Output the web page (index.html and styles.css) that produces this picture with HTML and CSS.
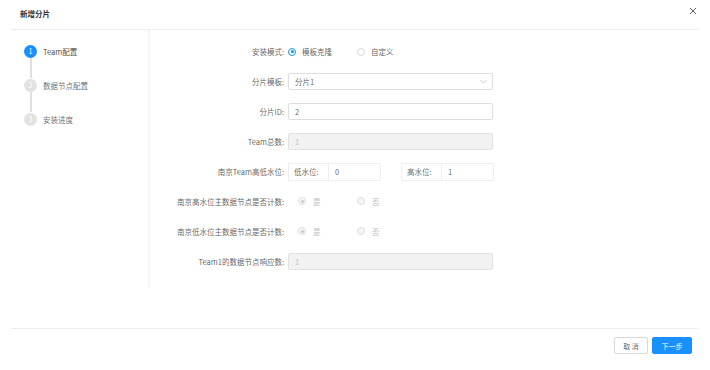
FILE: index.html
```html
<!DOCTYPE html>
<html lang="zh">
  <head>
    <meta charset="utf-8">
    <title>新增分片</title>
    <link rel="stylesheet" href="styles.css">
  </head>
  <body>
    <div class="modal">
      <div class="modal-header">
        <span class="modal-title">新增分片</span>
        <svg class="modal-close" width="8" height="8" viewBox="0 0 8 8">
          <path d="M1 1 L7 7 M7 1 L1 7" stroke="#666" stroke-width="1" fill="none"/>
        </svg>
      </div>
      <div class="modal-body">
        <ul class="steps">
          <li class="step step-active"><span class="step-icon">1</span><span class="step-title">Team配置</span></li>
          <li class="step"><span class="step-icon">2</span><span class="step-title">数据节点配置</span></li>
          <li class="step step-last"><span class="step-icon">3</span><span class="step-title">安装进度</span></li>
        </ul>
        <form class="form">
          <div class="form-row">
            <label class="form-label">安装模式:</label>
            <div class="form-control radio-group">
              <span class="radio"><span class="radio-dot radio-checked"></span>模板克隆</span>
              <span class="radio"><span class="radio-dot"></span>自定义</span>
            </div>
          </div>
          <div class="form-row">
            <label class="form-label">分片模板:</label>
            <div class="form-control">
              <div class="input select">
                <span>分片1</span>
                <svg width="7" height="5" viewBox="0 0 7 5"><path d="M0.5 1 L3.5 4 L6.5 1" stroke="#bfbfbf" stroke-width="0.8" fill="none"/></svg>
              </div>
            </div>
          </div>
          <div class="form-row">
            <label class="form-label">分片ID:</label>
            <div class="form-control"><div class="input">2</div></div>
          </div>
          <div class="form-row">
            <label class="form-label">Team总数:</label>
            <div class="form-control"><div class="input input-disabled">1</div></div>
          </div>
          <div class="form-row">
            <label class="form-label">南京Team高低水位:</label>
            <div class="form-control water">
              <div class="input-group">
                <span class="addon">低水位:</span><span class="input addon-input">0</span>
              </div>
              <div class="input-group">
                <span class="addon">高水位:</span><span class="input addon-input">1</span>
              </div>
            </div>
          </div>
          <div class="form-row">
            <label class="form-label">南京高水位主数据节点是否计数:</label>
            <div class="form-control radio-group radio-disabled">
              <span class="radio"><span class="radio-dot radio-checked"></span>是</span>
              <span class="radio"><span class="radio-dot"></span>否</span>
            </div>
          </div>
          <div class="form-row">
            <label class="form-label">南京低水位主数据节点是否计数:</label>
            <div class="form-control radio-group radio-disabled">
              <span class="radio"><span class="radio-dot radio-checked"></span>是</span>
              <span class="radio"><span class="radio-dot"></span>否</span>
            </div>
          </div>
          <div class="form-row">
            <label class="form-label">Team1的数据节点响应数:</label>
            <div class="form-control"><div class="input input-disabled">1</div></div>
          </div>
        </form>
      </div>
      <div class="modal-footer">
        <button class="btn" type="button">取 消</button>
        <button class="btn btn-primary" type="button">下一步</button>
      </div>
    </div>
  </body>
</html>
```

FILE: styles.css
```css
html {
  font-family: "Noto Sans CJK SC", "Noto Sans", sans-serif;
}

body {
  margin: 0;
  background: #fff;
  color: rgba(0, 0, 0, 0.65);
  font-size: 7.5px;
}

.modal {
  width: 710px;
  height: 370px;
  padding: 0 11px;
  box-sizing: border-box;
}

.modal-header {
  height: 29px;
  border-bottom: 1px solid #eeeeee;
  display: flex;
  align-items: center;
  justify-content: space-between;
  padding: 0 2px 0 9px;
}

.modal-title {
  font-weight: bold;
  color: rgba(0, 0, 0, 0.85);
  font-size: 7.5px;
  margin-top: -2px;
}

.modal-close {
  margin-top: -7px;
}

.modal-body {
  display: flex;
  height: 257px;
}

.steps {
  list-style: none;
  margin: 0;
  padding: 4px 0 0 13px;
  width: 124px;
  border-right: 2px solid #f5f5f5;
}

.step {
  display: flex;
  align-items: center;
  height: 34px;
  position: relative;
}

.step::after {
  content: "";
  position: absolute;
  left: 6px;
  top: 24px;
  width: 1.5px;
  height: 20px;
  background: #e0e0e0;
}

.step-last::after {
  display: none;
}

.step-icon {
  width: 13px;
  height: 13px;
  border-radius: 50%;
  background: #e2e2e2;
  color: #fff;
  font-size: 7px;
  line-height: 13px;
  text-align: center;
  margin-right: 6px;
}

.step-active .step-icon {
  background: #1890ff;
}

.step-active .step-title {
  color: rgba(0, 0, 0, 0.75);
}

.step-title {
  color: rgba(0, 0, 0, 0.6);
}

.form {
  flex: 1;
  padding-top: 7px;
}

.form-row {
  display: flex;
  align-items: center;
  height: 29.9px;
}

.form-label {
  width: 138px;
  text-align: right;
  padding-right: 4px;
  box-sizing: border-box;
}

.form-control {
  width: 205px;
}

.radio-group {
  display: flex;
}

.radio {
  display: flex;
  align-items: center;
  width: 69px;
}

.radio-dot {
  width: 8px;
  height: 8px;
  border: 1px solid #d9d9d9;
  border-radius: 50%;
  box-sizing: border-box;
  margin-right: 6px;
  position: relative;
}

.radio-checked {
  border-color: #1890ff;
}

.radio-checked::after {
  content: "";
  position: absolute;
  left: 1.5px;
  top: 1.5px;
  width: 3px;
  height: 3px;
  border-radius: 50%;
  background: #1890ff;
}

.radio-disabled {
  color: #bfbfbf;
}

.radio-disabled .radio:first-child {
  margin-left: 10px;
  width: 59px;
}

.radio-disabled .radio-dot {
  border-color: #e0e0e0;
  background: #f5f5f5;
  margin-right: 7px;
}

.radio-disabled .radio-checked::after {
  background: #c8c8c8;
}

.input {
  height: 17px;
  border: 1px solid #dedede;
  border-radius: 2px;
  box-sizing: border-box;
  padding: 0 6px;
  display: flex;
  align-items: center;
  color: rgba(0, 0, 0, 0.65);
}

.select {
  justify-content: space-between;
  padding-right: 5px;
}

.input-disabled {
  background: #f2f2f2;
  color: #c0c0c0;
  border-color: #e2e2e2;
}

.water {
  display: flex;
  gap: 20px;
  width: auto;
}

.input-group {
  display: flex;
  height: 18px;
}

.addon {
  width: 40px;
  height: 18px;
  border: 1px solid #eeeeee;
  border-right: none;
  box-sizing: border-box;
  padding-left: 5px;
  display: flex;
  align-items: center;
  border-radius: 2px 0 0 2px;
}

.addon-input {
  width: 53px;
  height: 18px;
  border-color: #eeeeee;
  border-radius: 0 2px 2px 0;
}

.modal-footer {
  margin-top: 41px;
  border-top: 1px solid #eeeeee;
  display: flex;
  justify-content: flex-end;
  gap: 4px;
  padding: 8px 7px 0 0;
}

.btn {
  height: 17px;
  padding: 0;
  border: 1px solid #d9d9d9;
  border-radius: 2px;
  background: #fff;
  color: rgba(0, 0, 0, 0.65);
  font-family: inherit;
  font-size: 7px;
  width: 34px;
}

.btn-primary {
  width: 40px;
  background: #1890ff;
  border-color: #1890ff;
  color: #fff;
}
```
